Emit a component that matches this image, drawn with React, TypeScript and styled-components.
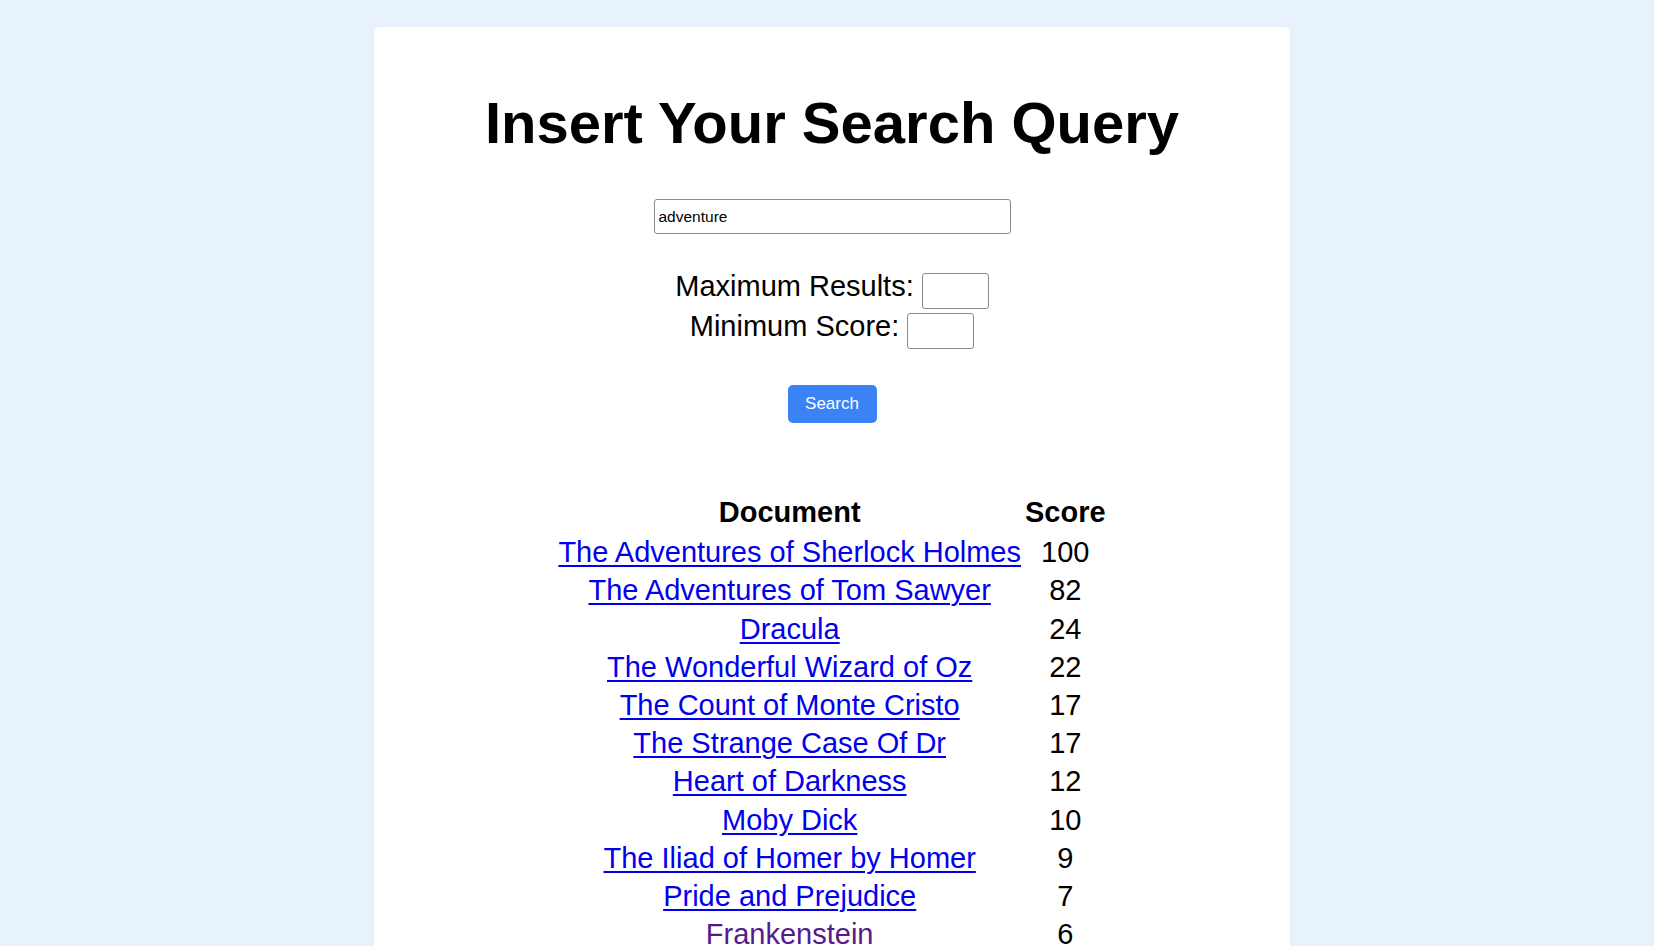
import React from "react";
import styled, { createGlobalStyle } from "styled-components";

const GlobalStyle = createGlobalStyle`
  html, body {
    margin: 0;
    padding: 0;
    background: #e8f2fc;
  }
  body {
    font-family: "Liberation Sans", Arial, Helvetica, sans-serif;
    color: #000;
  }
`;

const Page = styled.div`
  padding: 27px 0 0 10px;
  min-height: 100vh;
  box-sizing: border-box;
`;

const Card = styled.main`
  width: 916px;
  margin: 0 auto;
  background: #ffffff;
  border-radius: 6px;
  box-sizing: border-box;
  padding: 63px 24px 40px;
  display: flex;
  flex-direction: column;
  align-items: center;
`;

const Title = styled.h1`
  margin: 0;
  font-size: 58px;
  line-height: 66px;
  font-weight: 700;
  text-align: center;
`;

const QueryInput = styled.input`
  margin-top: 43px;
  width: 357px;
  height: 35px;
  box-sizing: border-box;
  border: 1px solid #8a8a8a;
  border-radius: 3px;
  padding: 0 4px;
  font-family: "Liberation Sans", Arial, sans-serif;
  font-size: 15.5px;
  color: #000;
  background: #fff;
  outline: none;
`;

const Options = styled.div`
  margin-top: 37px;
  display: flex;
  flex-direction: column;
  align-items: center;
`;

const OptionRow = styled.label`
  display: flex;
  align-items: center;
  justify-content: center;
  gap: 8px;
  height: 40px;
`;

const OptionText = styled.span`
  font-size: 29px;
  line-height: 33px;
  margin-bottom: 10px;
`;

const SmallInput = styled.input`
  width: 67px;
  height: 36px;
  box-sizing: border-box;
  border: 1px solid #8a8a8a;
  border-radius: 3px;
  background: #fff;
  font-size: 16px;
  outline: none;
`;

const SearchButton = styled.button`
  margin-top: 34px;
  width: 89px;
  height: 38px;
  border: none;
  border-radius: 5px;
  background: #3b82f6;
  color: #ffffff;
  font-family: "Liberation Sans", Arial, sans-serif;
  font-size: 17px;
  cursor: pointer;
`;

const ResultsTable = styled.table`
  margin-top: 69px;
  border-spacing: 2px;
  font-size: 29px;
`;

const HeadCell = styled.th`
  padding: 0 1px 2px;
  line-height: 36.2px;
  font-weight: 700;
  text-align: center;
`;

const Cell = styled.td`
  padding: 0 1px;
  line-height: 36.2px;
  text-align: center;
`;

const DocLink = styled.a<{ $visited?: boolean }>`
  color: ${(p) => (p.$visited ? "#551a8b" : "#0000ee")};
  text-decoration: underline;
  text-underline-offset: 3px;
  text-decoration-thickness: 2px;
`;

const results: { title: string; score: number; visited?: boolean }[] = [
  { title: "The Adventures of Sherlock Holmes", score: 100 },
  { title: "The Adventures of Tom Sawyer", score: 82 },
  { title: "Dracula", score: 24 },
  { title: "The Wonderful Wizard of Oz", score: 22 },
  { title: "The Count of Monte Cristo", score: 17 },
  { title: "The Strange Case Of Dr", score: 17 },
  { title: "Heart of Darkness", score: 12 },
  { title: "Moby Dick", score: 10 },
  { title: "The Iliad of Homer by Homer", score: 9 },
  { title: "Pride and Prejudice", score: 7 },
  { title: "Frankenstein", score: 6, visited: true },
];

export default function App() {
  return (
    <>
      <GlobalStyle />
      <Page>
        <Card>
          <Title>Insert Your Search Query</Title>
          <QueryInput type="text" defaultValue="adventure" />
          <Options>
            <OptionRow>
              <OptionText>Maximum Results:</OptionText>
              <SmallInput type="text" />
            </OptionRow>
            <OptionRow>
              <OptionText>Minimum Score:</OptionText>
              <SmallInput type="text" />
            </OptionRow>
          </Options>
          <SearchButton type="button">Search</SearchButton>
          <ResultsTable>
            <thead>
              <tr>
                <HeadCell>Document</HeadCell>
                <HeadCell>Score</HeadCell>
              </tr>
            </thead>
            <tbody>
              {results.map((r) => (
                <tr key={r.title}>
                  <Cell>
                    <DocLink href="#" $visited={r.visited}>
                      {r.title}
                    </DocLink>
                  </Cell>
                  <Cell>{r.score}</Cell>
                </tr>
              ))}
            </tbody>
          </ResultsTable>
        </Card>
      </Page>
    </>
  );
}
